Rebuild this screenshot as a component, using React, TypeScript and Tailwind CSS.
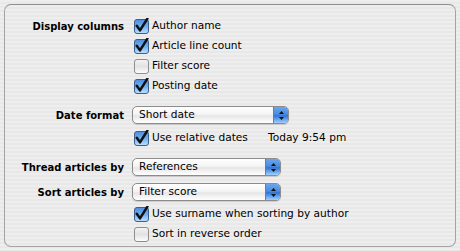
import React from 'react';

const stripes =
  'bg-[repeating-linear-gradient(to_bottom,#eeeeee_0px,#eeeeee_2px,#e8e8e8_2px,#e8e8e8_4px)]';

function CheckBox({ checked }: { checked: boolean }) {
  return (
    <svg width="17" height="17" viewBox="0 0 17 17" className="shrink-0">
      <defs>
        <linearGradient id={checked ? 'cbOn' : 'cbOff'} x1="0" y1="0" x2="0" y2="1">
          {checked ? (
            <>
              <stop offset="0" stopColor="#4f8fdc" />
              <stop offset="0.5" stopColor="#6eaef0" />
              <stop offset="1" stopColor="#bfe3ff" />
            </>
          ) : (
            <>
              <stop offset="0" stopColor="#f4f4f4" />
              <stop offset="0.5" stopColor="#e2e2e2" />
              <stop offset="1" stopColor="#ffffff" />
            </>
          )}
        </linearGradient>
      </defs>
      <rect
        x="1.5"
        y="1.5"
        width="14"
        height="14"
        rx="2.5"
        fill={`url(#${checked ? 'cbOn' : 'cbOff'})`}
        stroke={checked ? '#3b5f8c' : '#8e8e8e'}
      />
      {checked && (
        <path
          d="M3.8 7.8 L7 12.4 L14.4 0.6"
          fill="none"
          stroke="#111"
          strokeWidth="2.5"
          strokeLinecap="round"
          strokeLinejoin="round"
        />
      )}
    </svg>
  );
}

function CheckRow({ checked, label, width = '' }: { checked: boolean; label: string; width?: string }) {
  return (
    <div className={`${width} flex h-[20px] items-center gap-[2px] pl-[1px]`}>
      <CheckBox checked={checked} />
      <span>{label}</span>
    </div>
  );
}

function Popup({ value, width }: { value: string; width: string }) {
  return (
    <div
      className={`${width} flex h-[18px] overflow-hidden rounded-[5px] border border-[#8c8c8c] bg-[linear-gradient(to_bottom,#ffffff_0%,#f4f4f4_45%,#e6e6e6_55%,#ffffff_100%)] shadow-[0_1px_1px_rgba(0,0,0,0.15)]`}
    >
      <div className="flex flex-1 items-center pl-[6px]">{value}</div>
      <div className="flex w-[15px] items-center justify-center border-l border-[#5b7fae] bg-[linear-gradient(to_bottom,#6aa6ec_0%,#4a8ce0_45%,#2f74d6_55%,#9fd0ff_100%)]">
        <svg width="7" height="11" viewBox="0 0 7 11">
          <path d="M3.5 1 L6 4 L1 4 Z" fill="#111" />
          <path d="M3.5 10 L6 7 L1 7 Z" fill="#111" />
        </svg>
      </div>
    </div>
  );
}

function Label({ children }: { children: React.ReactNode }) {
  return <div className="text-right text-[10px] font-bold">{children}</div>;
}

export default function App() {
  return (
    <div
      className={`h-[251px] w-[460px] ${stripes} pt-[4px] pl-[4px] font-['DejaVu_Sans',sans-serif] text-[10.6px] text-black`}
    >
      <div
        className={`h-[243px] w-[452px] rounded-[7px] border border-[#a3a3a3] border-t-[#8e8e8e] ${stripes} pt-[11px]`}
      >
        <div className="grid grid-cols-[119px_1fr] gap-x-[8px]">
          <div className="flex h-[20px] items-center justify-end">
            <Label>Display columns</Label>
          </div>
          <CheckRow checked label="Author name" />
          <div />
          <CheckRow checked label="Article line count" />
          <div />
          <CheckRow checked={false} label="Filter score" />
          <div />
          <CheckRow checked label="Posting date" />

          <div className="mt-[10px] flex h-[18px] items-center justify-end">
            <Label>Date format</Label>
          </div>
          <div className="mt-[10px]">
            <Popup value="Short date" width="w-[157px]" />
          </div>

          <div className="mt-[4px]" />
          <div className="mt-[4px] flex items-center">
            <CheckRow checked label="Use relative dates" width="w-[136px]" />
            <span>Today 9:54 pm</span>
          </div>

          <div className="mt-[10px] flex h-[18px] items-center justify-end">
            <Label>Thread articles by</Label>
          </div>
          <div className="mt-[10px]">
            <Popup value="References" width="w-[149px]" />
          </div>

          <div className="mt-[7px] flex h-[18px] items-center justify-end">
            <Label>Sort articles by</Label>
          </div>
          <div className="mt-[7px]">
            <Popup value="Filter score" width="w-[149px]" />
          </div>

          <div className="mt-[3px]" />
          <div className="mt-[3px]">
            <CheckRow checked label="Use surname when sorting by author" />
          </div>
          <div />
          <CheckRow checked={false} label="Sort in reverse order" />
        </div>
      </div>
    </div>
  );
}
